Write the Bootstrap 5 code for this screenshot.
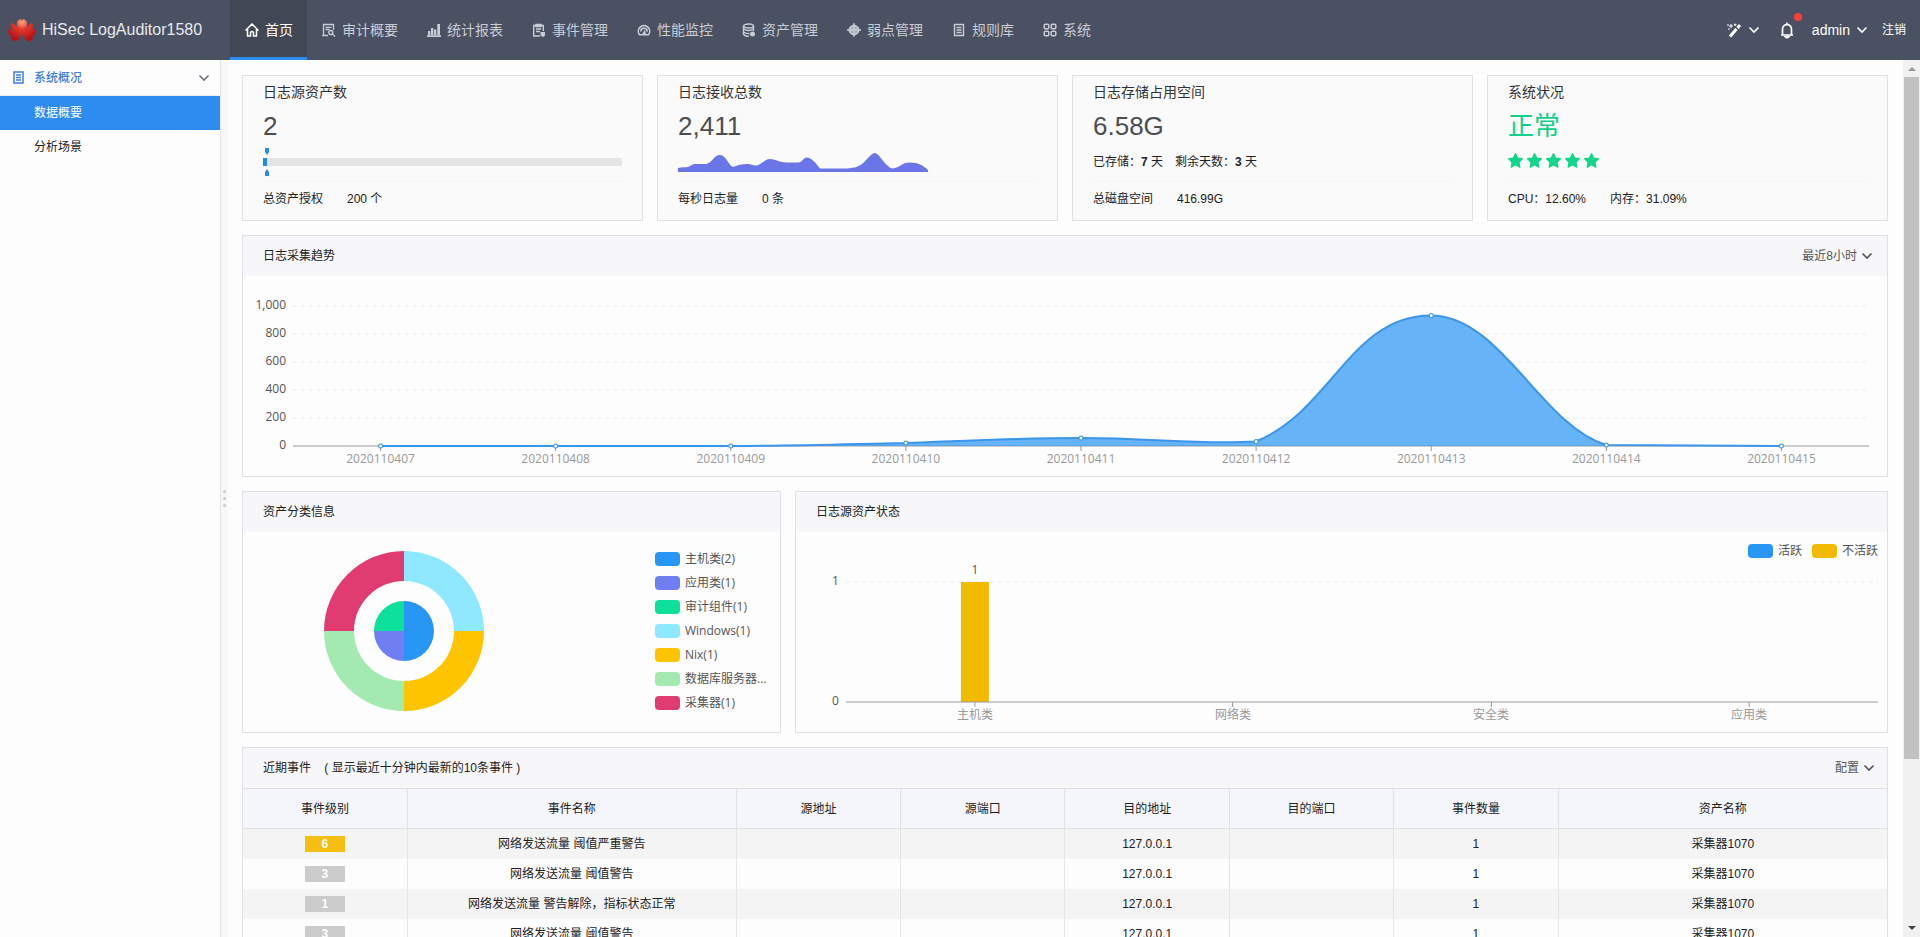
<!DOCTYPE html>
<html lang="zh-CN">
<head>
<meta charset="utf-8">
<meta name="viewport" content="width=device-width, initial-scale=1">
<title>HiSec LogAuditor1580</title>
<link href="https://cdn.jsdelivr.net/npm/bootstrap@5.3.0/dist/css/bootstrap.min.css" rel="stylesheet">
<style>
body{font-family:"Liberation Sans","Noto Sans CJK SC",sans-serif;font-size:12px;line-height:20px;color:#222;background:#fdfdfe}
a{text-decoration:none}
svg{display:block;flex:none}
.topbar{height:60px;background:#4a5162;color:#fff;flex:none}
.brand-box{width:230px;padding-left:8px;gap:6px;font-size:16px;color:#e8eaee;white-space:nowrap}
.menu-link{height:60px;padding:2px 14px 0 15px;gap:6px;font-size:14px;color:#c9cdd6;border-bottom:3px solid transparent;white-space:nowrap}
.menu-link.active{background:#414755;color:#fff;border-bottom-color:#2d8cf0}
.tools{padding-right:14px}
.tool{background:none;border:0;color:#fff;padding:0;display:flex;align-items:center;gap:6px}
.user-menu{font-size:14px;margin:0 14px 0 18px}
.alert-dot{width:8px;height:8px;background:#f5403d;top:-9px;right:-8px}
.side{width:221px;flex:none;border-right:1px solid #e2e3e7}
.side-head{height:36px;padding:0 10px 0 13px;gap:10px;border:0;border-bottom:1px solid #eceef2;background:none;color:#3f7fd0;font-weight:500}
.side-link{height:34px;padding-left:34px;color:#222}
.side-link.active{background:#2d8cf0;color:#fff}
.splitter{width:7px;flex:none;background:#f6f7f8;gap:4px}
.splitter i{width:3px;height:3px;background:#c5c8ce;border-radius:50%}
.work{padding:15px 15px 0 14px;gap:14px;overflow-y:auto;scrollbar-width:none}
.work::-webkit-scrollbar{display:none}
.rail{width:17px;flex:none;background:#f1f1f1;padding-left:1px}
.rail-thumb{height:682px;width:15px;background:#c1c1c1}
.panel{border:1px solid #dfe1e6;background:#fdfdfe;flex:none}
.grid4{display:grid;grid-template-columns:repeat(4,1fr);gap:14px;flex:none}
.grid2{display:grid;grid-template-columns:539px 1fr;gap:14px;flex:none}
.stat{background:#fafafb;padding:0 20px 4px}
.stat-title{font-size:14px;line-height:32px;color:#333}
.stat-value{font-size:26px;line-height:36px;color:#4c4d50}
.stat-mid{height:36px}
.stat-foot{border-top:1px solid #f5f5f7;margin-top:1px;line-height:34px}
.gauge{gap:3px}
.gauge-track{height:8px;background:#e4e4e4;width:100%}
.gauge-fill{height:8px;background:#1d8ee6}
.panel-head{height:40px;padding:0 14px 0 20px;background:#f7f7f9}
.plain{background:none;border:0;padding:0;color:#555;font-size:12px}
.chart{font-family:"Open Sans","Noto Sans CJK SC",sans-serif;font-size:12px;color:#555}
.y-axis{width:50px;padding-right:7px;text-align:right}
.x-axis{color:#999;text-align:center;display:grid}
.trend-body{height:200px;padding-top:16px;padding-right:18px}
.trend-body .y-axis div{height:28px;line-height:26px}
.trend-body .x-axis{grid-template-columns:repeat(9,1fr);padding-top:3px}
.pie-body{height:200px;padding:15px 13px 0 81px}
.pie-legend{width:112px}
.pie-legend li{height:24px;gap:5px;white-space:nowrap}
.key{width:25px;height:14px;border-radius:4px;flex:none}
.bar-body{height:200px;padding:9px 9px 0 0}
.bar-body .x-axis{grid-template-columns:repeat(4,1fr);padding-top:3px}
.ev{table-layout:fixed;width:100%;text-align:center;font-size:12px;color:#222;border-collapse:collapse}
.ev th{height:40px;background:#f5f6fb;font-weight:400;border:solid #dfe1e9;border-width:1px 1px 1px 0}
.ev td{height:30px;border-right:1px solid #e4e5ea;padding:0}
.ev th:last-child,.ev td:last-child{border-right:0}
.ev tbody tr:nth-child(odd){background:#f4f4f5}
.level{display:inline-block;width:40px;line-height:16px;background:#cbcbcb;color:#fff;font-weight:700}
.level.warn{background:#f6bd13}
</style>
</head>
<body class="vh-100 d-flex flex-column overflow-hidden">
<svg width="0" height="0" class="position-absolute" aria-hidden="true">
  <symbol id="chev" viewBox="0 0 12 12"><path d="M1.500 3.500 6 8l4.500-4.500" fill="none" stroke="currentColor" stroke-width="1.600"/></symbol>
  <symbol id="star" viewBox="0 0 16 16"><path d="M8 .8l2.200 4.700 5.100.7-3.700 3.600.9 5.200L8 12.500 3.500 15l.9-5.200L.7 6.200l5.100-.7z" fill="#12d68a" stroke="#12d68a" stroke-width="1.500" stroke-linejoin="round"/></symbol>
</svg>

<header class="topbar d-flex align-items-center">
  <a href="#" class="brand-box d-flex align-items-center">
    <svg width="28" height="24" viewBox="0 0 28 24">
      <defs><radialGradient id="petal" gradientUnits="userSpaceOnUse" cx="14" cy="4" r="18"><stop offset="0" stop-color="#ffb08a"/><stop offset=".4" stop-color="#ea3a28"/><stop offset="1" stop-color="#bd0e12"/></radialGradient></defs>
      <g fill="url(#petal)" stroke="url(#petal)" stroke-width=".8">
        <path d="M13.500 17C10 12 8.500 7 9.500 3.500Q11 1.500 13 1.500 14.500 7 13.500 17zM14.500 17C18 12 19.500 7 18.500 3.500Q17 1.500 15 1.500 13.500 7 14.500 17z"/>
        <path d="M12.500 17.500C11 13 8.500 8 4.500 5 2.500 7 2.500 10 5 12.500 7 14.500 10 16.500 12.500 17.500zM15.500 17.500C17 13 19.500 8 23.500 5 25.500 7 25.500 10 23 12.500 21 14.500 18 16.500 15.500 17.500z"/>
        <path d="M12 18.500C8.500 15.500 5 13 1 11.500 0 14.500 1.500 17 4 18 7 19 9.500 18.800 12 18.500zM16 18.500C19.500 15.500 23 13 27 11.500 28 14.500 26.500 17 24 18 21 19 18.500 18.800 16 18.500z"/>
        <path d="M12 19.200H3C4 22 6 23.500 8.500 22.500 10 21.800 11.200 20.500 12 19.200zM16 19.200H25C24 22 22 23.500 19.500 22.500 18 21.800 16.800 20.500 16 19.200z"/>
      </g>
    </svg>
    <span>HiSec LogAuditor1580</span>
  </a>
  <nav class="d-flex">
    <a href="#" class="menu-link active d-flex align-items-center" aria-current="page"><svg width="14" height="14" viewBox="0 0 14 14" fill="none" stroke="currentColor" stroke-width="1.500"><path d="M.5 7.500 7 1l6.500 6.500M2.500 6v7H5.500V9.500Q7 7.500 8.500 9.500V13h3V6"/></svg>首页</a>
    <a href="#" class="menu-link d-flex align-items-center"><svg width="14" height="14" viewBox="0 0 14 14" fill="none" stroke="currentColor" stroke-width="1.300"><path d="M6 12.500H1.500v-11h10V7M3.500 4.300h6M3.500 6.500h4M0 12.600h6"/><circle cx="8.800" cy="9.500" r="2"/><path d="M10.300 11 13 13.500"/></svg>审计概要</a>
    <a href="#" class="menu-link d-flex align-items-center"><svg width="14" height="14" viewBox="0 0 14 14" fill="currentColor"><path d="M1 8h2.300v4H1zM4 5h2.300v7H4zM7 6.500h2.300V12H7zM10.300 1h2.700v11h-2.700zM0 12.300h14V14H0z"/></svg>统计报表</a>
    <a href="#" class="menu-link d-flex align-items-center"><svg width="14" height="14" viewBox="0 0 14 14" fill="none" stroke="currentColor" stroke-width="1.400"><path d="M8 13H1.700V2.500h9.600V8M4 1.500h5v2H4zM4 6h5M4 8.500h4"/><path d="M8.500 9H13v3.500L11 14 8.500 12.500z" fill="currentColor" stroke="none"/></svg>事件管理</a>
    <a href="#" class="menu-link d-flex align-items-center"><svg width="14" height="14" viewBox="0 0 14 14" fill="none" stroke="currentColor" stroke-width="1.600"><path d="M2.500 11.800A5.700 5.700 0 1 1 11.500 11.800zM3.800 8.500a3.200 3.200 0 0 1 6.400 0"/><path d="M5 11.500 8 6.500l1 5z" fill="currentColor" stroke="none"/></svg>性能监控</a>
    <a href="#" class="menu-link d-flex align-items-center"><svg width="14" height="14" viewBox="0 0 14 14" fill="none" stroke="currentColor" stroke-width="1.400"><ellipse cx="6.500" cy="3" rx="5" ry="2"/><path d="M1.500 3v8.500q2 2 5.500 2M11.500 3v5M1.500 6q5 3 10 0M1.500 9q3 2 6 1.500"/><circle cx="10.500" cy="11" r="2.500" fill="currentColor" stroke="none"/></svg>资产管理</a>
    <a href="#" class="menu-link d-flex align-items-center"><svg width="14" height="14" viewBox="0 0 14 14" fill="none" stroke="currentColor" stroke-width="1.300"><path d="M7 1 11.800 4.500 13 7l-1.200 2.500L7 13 2.200 9.500 1 7l1.200-2.500z" fill="currentColor" fill-opacity=".75" stroke="none"/><circle cx="7" cy="7" r="4.500"/><path d="M7 0v14M0 7h14"/></svg>弱点管理</a>
    <a href="#" class="menu-link d-flex align-items-center"><svg width="14" height="14" viewBox="0 0 14 14" fill="none" stroke="currentColor" stroke-width="1.400"><path d="M2.500 1.500h9v11h-9zM4.500 4.500h5M4.500 7h5M4.500 9.500h5"/></svg>规则库</a>
    <a href="#" class="menu-link d-flex align-items-center"><svg width="14" height="14" viewBox="0 0 14 14" fill="none" stroke="currentColor" stroke-width="1.500"><rect x="1.200" y="1.200" width="4.600" height="4.600" rx="1.200"/><rect x="8.200" y="1.200" width="4.600" height="4.600" rx="1.200"/><rect x="1.200" y="8.200" width="4.600" height="4.600" rx="1.200"/><rect x="8.200" y="8.200" width="4.600" height="4.600" rx="1.200"/></svg>系统</a>
  </nav>
  <div class="tools ms-auto d-flex align-items-center">
    <button type="button" class="tool me-3" aria-label="主题"><svg width="15" height="15" viewBox="0 0 15 15" fill="none" stroke="currentColor"><path d="M3 13.500 9.500 6" stroke-width="3"/><path d="M10.500 5 13 2" stroke-width="3"/><path d="M4 1v4M2 3h4M8 .5v2.500M7 1.800h2.500M0 2h2M1 6h2" stroke-width="1"/></svg><svg width="12" height="12"><use href="#chev"/></svg></button>
    <button type="button" class="tool position-relative ms-1" aria-label="通知"><svg width="14" height="17" viewBox="0 0 14 17" fill="none" stroke="currentColor" stroke-width="1.700"><path d="M1 13h12M2.500 13V7.500q0-4.500 4.500-5 4.500.5 4.500 5V13M7 2.500V.5"/><path d="M5 14.500q2 2.500 4 0z" fill="currentColor"/></svg><span class="alert-dot position-absolute rounded-circle"></span></button>
    <button type="button" class="tool user-menu">admin<svg width="12" height="12"><use href="#chev"/></svg></button>
    <a href="#" class="text-white">注销</a>
  </div>
</header>

<div class="d-flex flex-grow-1 overflow-hidden">
  <aside class="side">
    <button type="button" class="side-head w-100 d-flex align-items-center"><svg width="11" height="13" viewBox="0 0 11 13" fill="none" stroke="currentColor" stroke-width="1.500"><path d="M1 1h9v11H1zM3 4h5M3 6.500h5M3 9h5"/></svg><span>系统概况</span><svg width="12" height="12" class="ms-auto text-secondary"><use href="#chev"/></svg></button>
    <a href="#" class="side-link active d-flex align-items-center">数据概要</a>
    <a href="#" class="side-link d-flex align-items-center">分析场景</a>
  </aside>
  <div class="splitter d-flex flex-column align-items-center justify-content-center"><i></i><i></i><i></i></div>

  <main class="work flex-grow-1 d-flex flex-column">
    <section class="grid4">
      <div class="panel stat">
        <div class="stat-title">日志源资产数</div>
        <div class="stat-value">2</div>
        <div class="stat-mid gauge d-flex flex-column justify-content-center">
          <svg width="8" height="7" viewBox="0 0 8 7"><path d="M2 0h4v4L4 7 2 4z" fill="#2b8fd8"/></svg>
          <div class="gauge-track"><div class="gauge-fill" style="width:1%"></div></div>
          <svg width="8" height="7" viewBox="0 0 8 7"><path d="M2 7h4V3L4 0 2 3z" fill="#2b8fd8"/></svg>
        </div>
        <div class="stat-foot"><span class="me-4">总资产授权</span>200 个</div>
      </div>
      <div class="panel stat">
        <div class="stat-title">日志接收总数</div>
        <div class="stat-value">2,411</div>
        <div class="stat-mid d-flex align-items-center">
          <svg width="250" height="20" viewBox="0 0 250 20"><path d="M0 16C4 15 7 15.500 10 15 13 14 14 12 17 12H28C34 11 36 3 42 3S51 14 55 15C60 13 64 12 69 12S75 14 79 13.500C84 12 87 7 92 7S100 10 109 10.500H120C124 11 125 5.500 129 5.500S138 11 142 16.500H165C175 16.500 180 15 184 12S193 1 197 1 208 16 215 16.500C221 16 224 10.500 232 10.500S246 14 250 18V20H0z" fill="#6a75e8"/></svg>
        </div>
        <div class="stat-foot"><span class="me-4">每秒日志量</span>0 条</div>
      </div>
      <div class="panel stat">
        <div class="stat-title">日志存储占用空间</div>
        <div class="stat-value">6.58G</div>
        <div class="stat-mid d-flex align-items-center"><span>已存储：<b>7</b> 天</span><span class="ms-2 ps-1">剩余天数：<b>3</b> 天</span></div>
        <div class="stat-foot"><span class="me-4">总磁盘空间</span>416.99G</div>
      </div>
      <div class="panel stat">
        <div class="stat-title">系统状况</div>
        <div class="stat-value" style="color:#12d08a">正常</div>
        <div class="stat-mid d-flex align-items-center pb-1" style="gap:4px">
          <svg width="15" height="15"><use href="#star"/></svg><svg width="15" height="15"><use href="#star"/></svg><svg width="15" height="15"><use href="#star"/></svg><svg width="15" height="15"><use href="#star"/></svg><svg width="15" height="15"><use href="#star"/></svg>
        </div>
        <div class="stat-foot"><span class="me-4">CPU：12.60%</span>内存：31.09%</div>
      </div>
    </section>

    <section class="panel">
      <div class="panel-head d-flex align-items-center justify-content-between"><span>日志采集趋势</span>
        <button type="button" class="plain d-flex align-items-center gap-1">最近8小时<svg width="12" height="12"><use href="#chev"/></svg></button></div>
      <div class="chart trend-body d-flex">
        <div class="y-axis"><div>1,000</div><div>800</div><div>600</div><div>400</div><div>200</div><div>0</div></div>
        <div class="flex-grow-1">
          <svg class="w-100 mt-2 overflow-visible" height="146" viewBox="0 -6 1575 146" preserveAspectRatio="none">
            <path d="M0 0H1575M0 28H1575M0 56H1575M0 84H1575M0 112H1575" stroke="#e9ebef" stroke-dasharray="4 4"/>
            <path d="M0 140H1575M87.500 140v5M262.500 140v5M437.500 140v5M612.500 140v5M787.500 140v5M962.500 140v5M1137.500 140v5M1312.500 140v5M1487.500 140v5" stroke="#999"/>
            <path d="M87 140H437C500 140 560 138 612 137 680 134 730 132 787 132 860 132 905 139 962 135.500 1037 106 1057 9.500 1137 9.500 1207 9.500 1247 119 1312 139L1487 140" fill="#2d95f5" fill-opacity=".72" stroke="#3b95e8" stroke-width="2"/>
            <g fill="#fff" stroke="#3b95e8"><circle cx="87.500" cy="140" r="2"/><circle cx="262.500" cy="140" r="2"/><circle cx="437.500" cy="140" r="2"/><circle cx="612.500" cy="137" r="2"/><circle cx="787.500" cy="132" r="2"/><circle cx="962.500" cy="135.500" r="2"/><circle cx="1137.500" cy="9.500" r="2"/><circle cx="1312.500" cy="139" r="2"/><circle cx="1487.500" cy="140" r="2"/></g>
          </svg>
          <div class="x-axis"><span>2020110407</span><span>2020110408</span><span>2020110409</span><span>2020110410</span><span>2020110411</span><span>2020110412</span><span>2020110413</span><span>2020110414</span><span>2020110415</span></div>
        </div>
      </div>
    </section>

    <section class="grid2">
      <div class="panel">
        <div class="panel-head d-flex align-items-center">资产分类信息</div>
        <div class="chart pie-body d-flex justify-content-between">
          <svg width="160" height="168" viewBox="-80 -84 160 168">
            <path d="M0-80A80 80 0 0 1 80 0H50A50 50 0 0 0 0-50z" fill="#8ee8ff"/>
            <path d="M80 0A80 80 0 0 1 0 80V50A50 50 0 0 0 50 0z" fill="#ffc400"/>
            <path d="M0 80A80 80 0 0 1-80 0H-50A50 50 0 0 0 0 50z" fill="#a3eab0"/>
            <path d="M-80 0A80 80 0 0 1 0-80V-50A50 50 0 0 0-50 0z" fill="#e03c72"/>
            <path d="M0-30A30 30 0 0 1 0 30z" fill="#2896f5"/>
            <path d="M0 30A30 30 0 0 1-30 0H0z" fill="#6f7ff2"/>
            <path d="M-30 0A30 30 0 0 1 0-30V0z" fill="#0de09a"/>
          </svg>
          <ul class="pie-legend list-unstyled m-0">
            <li class="d-flex align-items-center"><span class="key" style="background:#2896f5"></span>主机类(2)</li>
            <li class="d-flex align-items-center"><span class="key" style="background:#6f7ff2"></span>应用类(1)</li>
            <li class="d-flex align-items-center"><span class="key" style="background:#0de09a"></span>审计组件(1)</li>
            <li class="d-flex align-items-center"><span class="key" style="background:#8ee8ff"></span>Windows(1)</li>
            <li class="d-flex align-items-center"><span class="key" style="background:#ffc400"></span>Nix(1)</li>
            <li class="d-flex align-items-center"><span class="key" style="background:#a3eab0"></span>数据库服务器...</li>
            <li class="d-flex align-items-center"><span class="key" style="background:#e03c72"></span>采集器(1)</li>
          </ul>
        </div>
      </div>
      <div class="panel">
        <div class="panel-head d-flex align-items-center">日志源资产状态</div>
        <div class="chart bar-body">
          <div class="d-flex justify-content-end" style="gap:10px">
            <span class="d-flex align-items-center" style="gap:5px"><span class="key" style="background:#2896f5"></span>活跃</span>
            <span class="d-flex align-items-center" style="gap:5px"><span class="key" style="background:#f2bb00"></span>不活跃</span>
          </div>
          <div class="d-flex">
            <div class="y-axis d-flex flex-column justify-content-between" style="height:140px;margin-top:10px"><span>1</span><span>0</span></div>
            <div class="flex-grow-1">
              <svg class="w-100 overflow-visible" height="141" viewBox="0 -21 1033 141" preserveAspectRatio="none">
                <path d="M0 0H1033" stroke="#e9ebef" stroke-dasharray="4 4"/>
                <path d="M115 0h28v120h-28z" fill="#f2bb00"/>
                <path d="M0 120H1033M129 120v5M387 120v5M646 120v5M904 120v5" stroke="#999"/>
                <text x="129" y="-8" text-anchor="middle" fill="#555">1</text>
              </svg>
              <div class="x-axis"><span>主机类</span><span>网络类</span><span>安全类</span><span>应用类</span></div>
            </div>
          </div>
        </div>
      </div>
    </section>

    <section class="panel">
      <div class="panel-head d-flex align-items-center justify-content-between" style="padding-right:12px"><span>近期事件 &nbsp;&nbsp;&nbsp;( 显示最近十分钟内最新的10条事件 )</span>
        <button type="button" class="plain d-flex align-items-center gap-1">配置<svg width="12" height="12"><use href="#chev"/></svg></button></div>
      <table class="ev">
        <colgroup><col style="width:10%"><col style="width:20%"><col style="width:10%"><col style="width:10%"><col style="width:10%"><col style="width:10%"><col style="width:10%"><col style="width:20%"></colgroup>
        <thead><tr><th>事件级别</th><th>事件名称</th><th>源地址</th><th>源端口</th><th>目的地址</th><th>目的端口</th><th>事件数量</th><th>资产名称</th></tr></thead>
        <tbody>
          <tr><td><span class="level warn">6</span></td><td>网络发送流量 阈值严重警告</td><td></td><td></td><td>127.0.0.1</td><td></td><td>1</td><td>采集器1070</td></tr>
          <tr><td><span class="level">3</span></td><td>网络发送流量 阈值警告</td><td></td><td></td><td>127.0.0.1</td><td></td><td>1</td><td>采集器1070</td></tr>
          <tr><td><span class="level">1</span></td><td>网络发送流量 警告解除，指标状态正常</td><td></td><td></td><td>127.0.0.1</td><td></td><td>1</td><td>采集器1070</td></tr>
          <tr><td><span class="level">3</span></td><td>网络发送流量 阈值警告</td><td></td><td></td><td>127.0.0.1</td><td></td><td>1</td><td>采集器1070</td></tr>
        </tbody>
      </table>
    </section>
  </main>
  <div class="rail d-flex flex-column" aria-hidden="true">
    <svg width="16" height="17" viewBox="0 0 16 17"><path d="M4 11 8 7l4 4z" fill="#999"/></svg>
    <div class="rail-thumb"></div>
    <svg width="16" height="17" viewBox="0 0 16 17" class="mt-auto"><path d="M4 6l4 4 4-4z" fill="#444"/></svg>
  </div>
</div>
<script src="https://cdn.jsdelivr.net/npm/bootstrap@5.3.0/dist/js/bootstrap.bundle.min.js"></script>
</body>
</html>
